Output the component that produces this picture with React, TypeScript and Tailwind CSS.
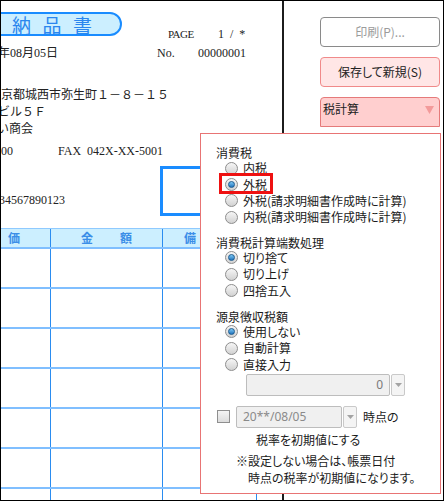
import React from "react"

const docFont = "font-['Liberation_Serif','Noto_Sans_CJK_JP',serif]"
const uiFont = "font-['Noto_Sans_CJK_JP','Noto_Sans',sans-serif] [font-feature-settings:'palt']"

const Radio = ({ label, checked }: { label: string; checked?: boolean }) => (
  <div className="flex h-[16.4px] items-center pl-[24px]">
    <span className="flex size-[13px] items-center justify-center rounded-full border border-[#8d8d8d] bg-linear-to-b from-[#f6f6f6] to-[#d2d2d2]">
      {checked && (
        <span className="size-[7px] rounded-full border border-[#1b5a8e] bg-linear-to-b from-[#7cc8f4] to-[#1f74bc]" />
      )}
    </span>
    <span className="ml-[5px] leading-[16px]">{label}</span>
  </div>
)

const DropButton = () => (
  <div className="ml-[1px] flex h-[22px] w-[14px] items-center justify-center rounded-[2px] border border-[#c9c9c9] bg-[#f4f4f4]">
    <svg width="7" height="4" viewBox="0 0 7 4">
      <path d="M0 0 L7 0 L3.5 4 Z" fill="#a3a3a3" />
    </svg>
  </div>
)

const rows = [1, 2, 3, 4, 5, 6, 7]

const App = () => {
  return (
    <div className="h-[501px] w-[444px] overflow-hidden bg-white">
      <div className="relative flex h-full w-full border border-black bg-white">
        {/* 帳票プレビュー */}
        <div className={`flex w-[283px] flex-col overflow-hidden border-r-2 border-[#1c1c1c] text-[12px] text-[#222] ${docFont}`}>
          <div className="flex h-[40px] shrink-0 items-start">
            <div className="ml-[-20px] mt-[11px] flex h-[24px] w-[141px] shrink-0 items-center rounded-[12px] border-2 border-[#1a8cff] bg-[#ccefff] pl-[29px] font-['Noto_Sans_CJK_JP',sans-serif] text-[19px] leading-none tracking-[11.5px] text-[#2a86ee]">
              納品書
            </div>
            <div className="ml-[46px] mt-[26px] flex leading-[14px]">
              <span className="w-[50px] text-[11px] tracking-[-0.5px]">PAGE</span>
              <span className="whitespace-pre [word-spacing:3px]">1 / *</span>
            </div>
          </div>

          <div className="mt-[5px] flex h-[14px] shrink-0 leading-[14px]">
            <span className="ml-[-3px] w-[159px] shrink-0">年08月05日</span>
            <span className="w-[41px] shrink-0">No.</span>
            <span>00000001</span>
          </div>

          <div className="mt-[27px] shrink-0 leading-[17px]">
            <div className="whitespace-nowrap">京都城西市弥生町１－８－１５</div>
            <div className="ml-[-3px] whitespace-nowrap">ビル５Ｆ</div>
            <div className="ml-[-4px] whitespace-nowrap">い商会</div>
          </div>

          <div className="mt-[6px] flex h-[14px] shrink-0 leading-[14px]">
            <span className="w-[57px] shrink-0">00</span>
            <span className="w-[29px] shrink-0">FAX</span>
            <span>042X-XX-5001</span>
          </div>

          <div className="mt-[8px] flex h-[50px] shrink-0 items-start">
            <span className="ml-[-2px] mt-[27px] w-[161px] shrink-0 leading-[14px]">34567890123</span>
            <div className="h-[50px] w-[90px] shrink-0 border-[3px] border-[#1a8cff]" />
          </div>

          <div className="mt-[12px] shrink-0 border-t border-[#8fcaff]">
            <div className="flex h-[20px] border-b-2 border-[#80bfff] bg-[#ccefff] font-['Noto_Sans_CJK_JP',sans-serif] text-[12px] font-bold leading-[18px] text-[#3b8ee8]">
              <div className="w-[50px] border-r border-[#2a8cf0] pl-[7px]">価</div>
              <div className="flex w-[112px] justify-center gap-[27px] border-r border-[#2a8cf0]">
                <span>金</span>
                <span>額</span>
              </div>
              <div className="flex w-[94px] justify-center gap-[27px] border-r border-[#2a8cf0]">
                <span>備</span>
                <span className="w-[12px]" />
              </div>
              <div className="flex-1" />
            </div>
            {rows.map((r) => (
              <div key={r} className="flex h-[40px] border-b-2 border-[#80bfff]">
                <div className="w-[50px] border-r border-[#2a8cf0]" />
                <div className="w-[112px] border-r border-[#2a8cf0]" />
                <div className="w-[94px] border-r border-[#2a8cf0]" />
                <div className="flex-1" />
              </div>
            ))}
          </div>
        </div>

        {/* 右側ボタン */}
        <div className={`flex flex-1 flex-col pl-[36px] pr-[3px] pt-[16px] text-[12px] ${uiFont}`}>
          <div className="flex h-[30px] items-center justify-center rounded-[4px] border border-[#8a8a8a] bg-white text-[#9b9b9b]">
            印刷(P)...
          </div>
          <div className="mt-[10px] flex h-[30px] items-center justify-center rounded-[4px] border border-[#f08a8a] bg-[#ffe6e6] text-[#222]">
            保存して新規(S)
          </div>
          <div className="mt-[10px] flex h-[30px] items-start justify-between rounded-t-[4px] border border-[#e57a7a] bg-[#ffcfcf] pl-[2px] pr-[5px] pt-[3px] text-[#222]">
            <span className="leading-[16px]">税計算</span>
            <svg width="9" height="8" viewBox="0 0 9 8" className="mt-[5px]">
              <path d="M0 0 L9 0 L4.5 8 Z" fill="#f39a9a" />
            </svg>
          </div>
        </div>

        {/* 税計算ポップアップ */}
        <div className={`absolute left-[199px] top-[132px] flex h-[361px] w-[241px] flex-col border border-[#e87474] bg-white pt-[11px] text-[12px] text-[#1a1a1a] ${uiFont}`}>
          <div className="pointer-events-none absolute left-[18px] top-[39px] h-[21px] w-[54px] border-[3px] border-[#ee1111]" />

          <div className="h-[15px] pl-[15px] leading-[15px]">消費税</div>
          <Radio label="内税" />
          <Radio label="外税" checked />
          <Radio label="外税(請求明細書作成時に計算)" />
          <Radio label="内税(請求明細書作成時に計算)" />

          <div className="mt-[10px] h-[14px] pl-[15px] leading-[14px]">消費税計算端数処理</div>
          <Radio label="切り捨て" checked />
          <Radio label="切り上げ" />
          <Radio label="四捨五入" />

          <div className="mt-[11px] h-[14px] pl-[15px] leading-[14px]">源泉徴収税額</div>
          <Radio label="使用しない" checked />
          <Radio label="自動計算" />
          <Radio label="直接入力" />

          <div className="mt-[1px] flex pl-[45px]">
            <div className="flex h-[22px] w-[144px] items-center justify-end rounded-[2px] border border-[#bdbdbd] bg-[#f0f0f0] pr-[6px] text-[#7a7a7a] font-['Noto_Sans',sans-serif]">
              0
            </div>
            <DropButton />
          </div>

          <div className="mt-[10px] flex items-center pl-[16px]">
            <div className="size-[13px] border border-[#8f8f8f] bg-linear-to-b from-[#f4f4f4] to-[#dcdcdc]" />
            <div className="ml-[6px] flex h-[22px] w-[106px] items-center rounded-[2px] border border-[#bdbdbd] bg-[#f0f0f0] pl-[6px] text-[#8a8a8a] font-['Noto_Sans',sans-serif]">
              20**/08/05
            </div>
            <DropButton />
            <span className="ml-[6px] leading-[16px]">時点の</span>
          </div>

          <div className="mt-[4px] pl-[55px] leading-[16px]">税率を初期値にする</div>
          <div className="mt-[4px] pl-[35px] leading-[17px]">※設定しない場合は、帳票日付</div>
          <div className="pl-[47px] leading-[17px]">時点の税率が初期値になります。</div>
        </div>
      </div>
    </div>
  )
}

export default App
